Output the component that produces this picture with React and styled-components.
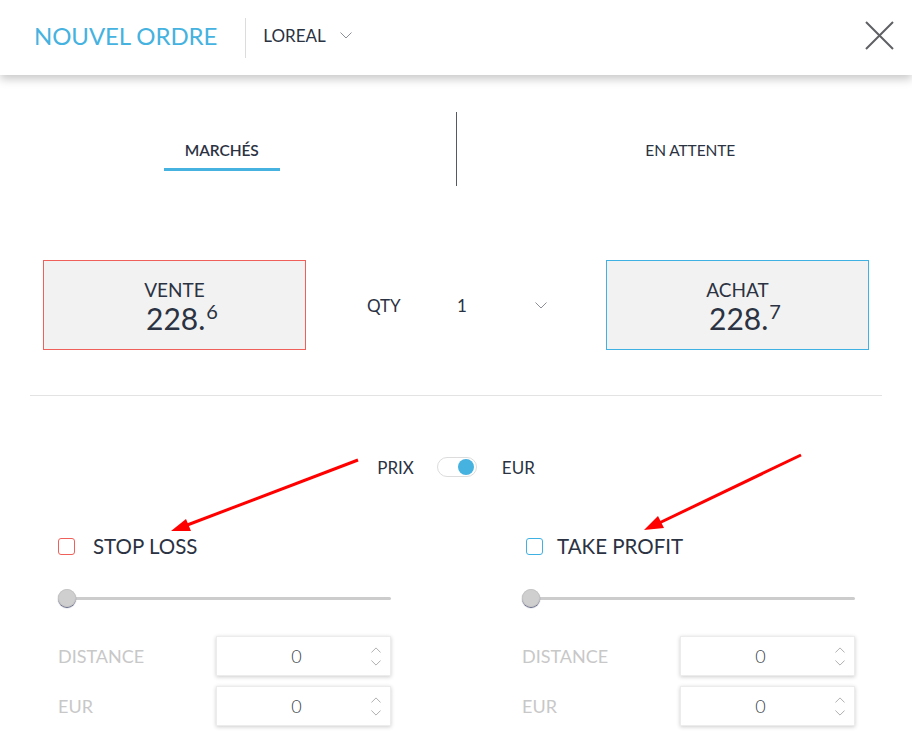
import React from "react";
import styled, { createGlobalStyle } from "styled-components";

const Global = createGlobalStyle`
  html, body { margin: 0; padding: 0; background: #fff; }
  body { font-family: Lato, "Open Sans", "Liberation Sans", sans-serif; color: #2b3242; }
  * { box-sizing: border-box; }
`;

const Page = styled.div`
  position: relative;
  width: 912px;
  height: 739px;
  overflow: hidden;
  background: #fff;
`;

const Header = styled.header`
  height: 75px;
  display: flex;
  align-items: center;
  padding: 0 18px 4px 34px;
  background: #fff;
  box-shadow: 0 4px 9px rgba(0, 0, 0, 0.22);
  position: relative;
  z-index: 1;
`;

const Title = styled.h1`
  margin: 0;
  font-size: 24px;
  font-weight: 400;
  color: #45b2e0;
  letter-spacing: -0.1px;
`;

const VDivider = styled.div`
  width: 1px;
  height: 40px;
  background: #dcdcdc;
  margin: 4px 17px 0 28px;
`;

const Instrument = styled.div`
  display: flex;
  align-items: center;
  gap: 14px;
  font-size: 17px;
  color: #2b3242;
`;

const CloseBtn = styled.button`
  margin-left: auto;
  background: none;
  border: 0;
  padding: 0;
  width: 30px;
  height: 30px;
  display: flex;
  align-items: center;
  justify-content: center;
  cursor: pointer;
`;

const Tabs = styled.div`
  margin-top: 37px;
  display: grid;
  grid-template-columns: 1fr 1px 1fr;
  height: 74px;
`;

const TabCell = styled.div`
  display: flex;
  justify-content: center;
  align-items: flex-start;
  padding-top: 28px;
  padding-left: ${(p) => (p.$side === "right" ? "12px" : "0")};
  padding-right: ${(p) => (p.$side === "left" ? "12px" : "0")};
`;

const TabDivider = styled.div`
  background: #555a60;
`;

const Tab = styled.div`
  font-size: 15.5px;
  line-height: 20px;
  font-weight: ${(p) => (p.$active ? 600 : 400)};
  color: #2b3242;
  padding: 0 ${(p) => (p.$active ? 21 : 0)}px 8px;
  border-bottom: 3px solid ${(p) => (p.$active ? "#45b2e0" : "transparent")};
  letter-spacing: -0.1px;
`;

const PriceRow = styled.div`
  margin-top: 74px;
  padding: 0 43px;
  display: grid;
  grid-template-columns: 263px 1fr 263px;
  align-items: center;
`;

const PriceBox = styled.button`
  height: 90px;
  background: #f2f2f2;
  border: 1px solid ${(p) => p.$color};
  font-family: inherit;
  color: #2b3242;
  display: flex;
  flex-direction: column;
  align-items: center;
  justify-content: center;
  gap: 4px;
  padding: 2px 0 0;
  cursor: pointer;
`;

const PriceLabel = styled.div`
  font-size: 19px;
  line-height: 20px;
`;

const PriceValue = styled.div`
  font-size: 30px;
  line-height: 28px;
  margin-left: 15px;
  sup {
    font-size: 20px;
    vertical-align: 11px;
    line-height: 0;
    margin-left: 1px;
  }
`;

const Qty = styled.div`
  display: flex;
  align-items: center;
  padding-left: 61px;
  font-size: 17px;
  color: #2b3242;
`;

const QtyLabel = styled.span`
  width: 90px;
`;

const QtyValue = styled.span`
  width: 78px;
`;

const HLine = styled.hr`
  margin: 45px 30px 0;
  border: 0;
  border-top: 1px solid #e3e3e3;
  height: 0;
`;

const ToggleRow = styled.div`
  margin-top: 61px;
  display: flex;
  justify-content: center;
  align-items: center;
  gap: 23px;
  font-size: 17px;
  color: #2b3242;
  height: 20px;
`;

const Switch = styled.div`
  width: 40px;
  height: 20px;
  border-radius: 10px;
  border: 1px solid #dcdcdc;
  background: #fff;
  display: flex;
  align-items: center;
  justify-content: flex-end;
  padding: 0 2px;
  margin-right: 2px;
`;

const Knob = styled.div`
  width: 16px;
  height: 16px;
  border-radius: 50%;
  background: #45b2e0;
`;

const Columns = styled.div`
  margin-top: 57px;
  padding: 0 57px 0 58px;
  display: grid;
  grid-template-columns: 1fr 1fr;
  column-gap: 131px;
`;

const Column = styled.div`
  display: flex;
  flex-direction: column;
`;

const CheckRow = styled.label`
  display: flex;
  align-items: center;
  height: 24px;
  font-size: 20.5px;
  color: #2b3242;
  padding-left: ${(p) => p.$indent || 0}px;
`;

const CheckBox = styled.span`
  width: 17px;
  height: 17px;
  border: 1px solid ${(p) => p.$color};
  border-radius: 3px;
  margin-right: ${(p) => p.$gap}px;
  flex: none;
`;

const Slider = styled.div`
  margin-top: 31px;
  height: 18px;
  position: relative;
  display: flex;
  align-items: center;
`;

const Track = styled.div`
  flex: 1;
  height: 3px;
  border-radius: 2px;
  background: #cccccc;
`;

const Thumb = styled.div`
  position: absolute;
  left: 0;
  top: 0;
  width: 18px;
  height: 18px;
  border-radius: 50%;
  background: #cfcfcf;
  box-shadow: 0 1px 1px #555a7a, inset 0 0 0 1px #c4c4c4;
`;

const Fields = styled.div`
  margin-top: 29px;
  display: flex;
  flex-direction: column;
  gap: 10px;
`;

const FieldRow = styled.div`
  display: grid;
  grid-template-columns: 158px 175px;
  align-items: center;
`;

const FieldLabel = styled.span`
  font-size: 18px;
  color: #c8c8c8;
`;

const NumberBox = styled.div`
  height: 40px;
  background: #fff;
  border: 1px solid #ececec;
  box-shadow: 0 1px 4px rgba(0, 0, 0, 0.2);
  display: flex;
  align-items: center;
`;

const NumberValue = styled.span`
  flex: 1;
  text-align: center;
  padding-left: 14px;
  font-size: 18px;
  font-weight: 300;
  color: #3a3f4a;
`;

const Spinner = styled.span`
  width: 28px;
  display: flex;
  flex-direction: column;
  align-items: center;
  gap: 7px;
`;

const Overlay = styled.svg`
  position: absolute;
  left: 0;
  top: 0;
  pointer-events: none;
`;

const Chevron = ({ w = 12, h = 7, color = "#8a8f98", up = false }) => (
  <svg width={w} height={h} viewBox="0 0 12 7" fill="none">
    <path
      d={up ? "M0.5 6.5 L6 1 L11.5 6.5" : "M0.5 0.5 L6 6 L11.5 0.5"}
      stroke={color}
      strokeWidth="1"
    />
  </svg>
);

const Field = ({ label }) => (
  <FieldRow>
    <FieldLabel>{label}</FieldLabel>
    <NumberBox>
      <NumberValue>0</NumberValue>
      <Spinner>
        <Chevron w={10} h={6} color="#a0a0a0" up />
        <Chevron w={10} h={6} color="#a0a0a0" />
      </Spinner>
    </NumberBox>
  </FieldRow>
);

const Side = ({ title, color, indent, gap }) => (
  <Column>
    <CheckRow $indent={indent}>
      <CheckBox $color={color} $gap={gap} />
      {title}
    </CheckRow>
    <Slider>
      <Track />
      <Thumb />
    </Slider>
    <Fields>
      <Field label="DISTANCE" />
      <Field label="EUR" />
    </Fields>
  </Column>
);

export default function App() {
  return (
    <Page>
      <Global />
      <Header>
        <Title>NOUVEL ORDRE</Title>
        <VDivider />
        <Instrument>
          LOREAL
          <Chevron />
        </Instrument>
        <CloseBtn aria-label="Fermer">
          <svg width="29" height="29" viewBox="0 0 29 29">
            <path d="M1 1 L28 28 M28 1 L1 28" stroke="#5f6064" strokeWidth="2" />
          </svg>
        </CloseBtn>
      </Header>

      <Tabs>
        <TabCell $side="left">
          <Tab $active>MARCHÉS</Tab>
        </TabCell>
        <TabDivider />
        <TabCell $side="right">
          <Tab>EN ATTENTE</Tab>
        </TabCell>
      </Tabs>

      <PriceRow>
        <PriceBox $color="#f0605a">
          <PriceLabel>VENTE</PriceLabel>
          <PriceValue>
            228.<sup>6</sup>
          </PriceValue>
        </PriceBox>
        <Qty>
          <QtyLabel>QTY</QtyLabel>
          <QtyValue>1</QtyValue>
          <Chevron />
        </Qty>
        <PriceBox $color="#3fb1e3">
          <PriceLabel>ACHAT</PriceLabel>
          <PriceValue>
            228.<sup>7</sup>
          </PriceValue>
        </PriceBox>
      </PriceRow>

      <HLine />

      <ToggleRow>
        <span>PRIX</span>
        <Switch>
          <Knob />
        </Switch>
        <span>EUR</span>
      </ToggleRow>

      <Columns>
        <Side title="STOP LOSS" color="#f0605a" indent={0} gap={18} />
        <Side title="TAKE PROFIT" color="#3fb1e3" indent={4} gap={14} />
      </Columns>

      <Overlay width="912" height="739" viewBox="0 0 912 739">
        <path d="M358 460 L182 527" stroke="#f00" strokeWidth="3" />
        <path d="M186 519 L171 531 L191 531 Z" fill="#f00" />
        <path d="M801 455 L655 525" stroke="#f00" strokeWidth="3" />
        <path d="M658 516 L644 530 L664 528 Z" fill="#f00" />
      </Overlay>
    </Page>
  );
}
